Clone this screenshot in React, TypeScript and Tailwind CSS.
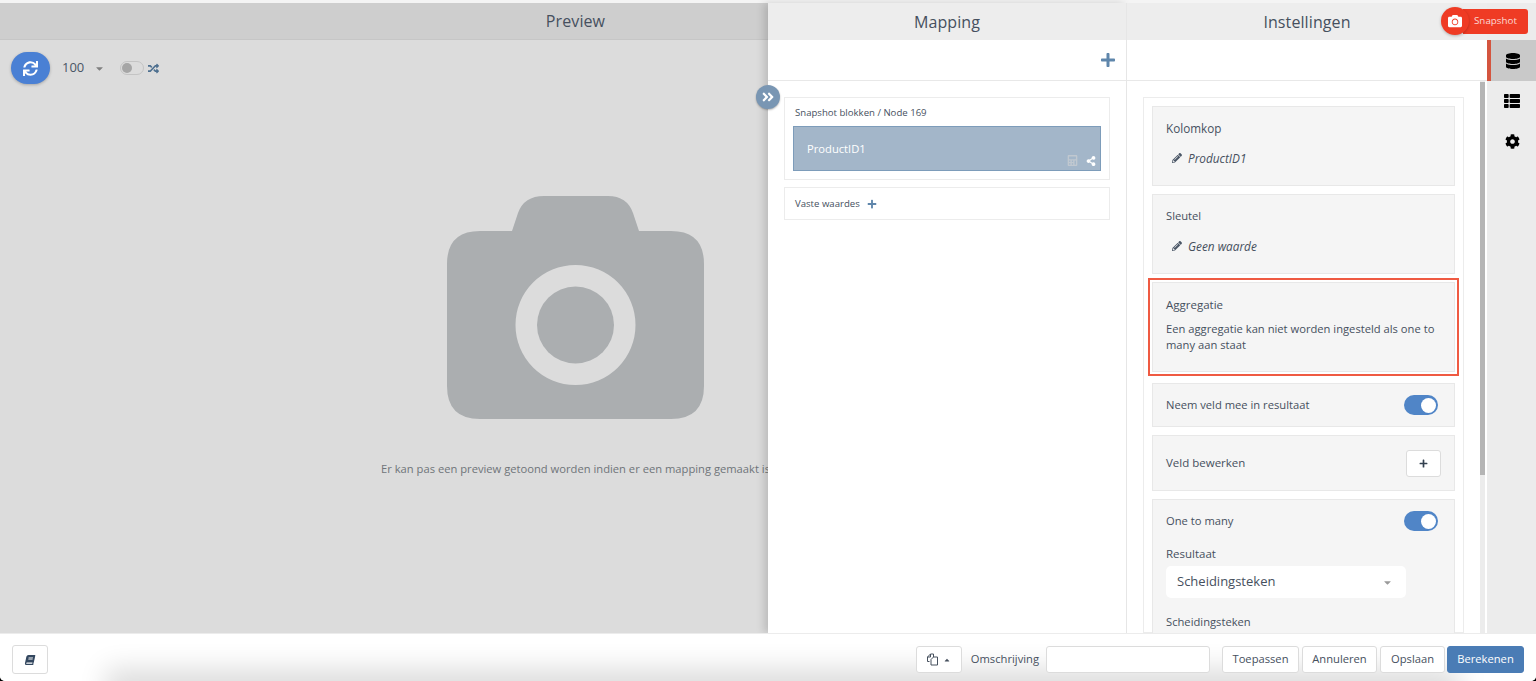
import {
  FaAngleDoubleRight,
  FaBook,
  FaCalculator,
  FaCamera,
  FaCaretDown,
  FaCaretUp,
  FaCog,
  FaDatabase,
  FaPencilAlt,
  FaPlus,
  FaRandom,
  FaShareAlt,
  FaSync,
  FaThList,
} from "react-icons/fa";

function Toggle() {
  return (
    <div className="flex h-[20px] w-[34px] items-center justify-end rounded-full bg-[#5085c7] pr-[2px]">
      <div className="h-[15px] w-[15px] rounded-full bg-white" />
    </div>
  );
}

function FieldPanel({ label, value, labelClass }: { label: string; value: string; labelClass: string }) {
  return (
    <div className="h-[80px] border border-[#e8e8e8] bg-[#f5f5f5] pl-[13px] pt-[13px]">
      <p className={`leading-[16px] ${labelClass}`}>{label}</p>
      <div className="mt-[14px] flex items-center gap-[6px] pl-[6px] text-[11.8px] italic">
        <FaPencilAlt className="text-[10px] text-[#4a5666]" />
        <span className="leading-[16px]">{value}</span>
      </div>
    </div>
  );
}

function FooterButton({ label, className }: { label: string; className: string }) {
  return (
    <button type="button" className={`h-[27px] rounded-[3px] border text-[11.2px] ${className}`}>
      {label}
    </button>
  );
}

export default function App() {
  return (
    <div className="h-screen bg-black">
      <div className="relative flex h-full flex-col overflow-hidden rounded-b-[5px] bg-[#f4f4f4] pt-[3px] font-['Open_Sans',sans-serif] text-[11.2px] text-[#46505e]">
        <div className="flex min-h-0 flex-1">
          {/* Preview, wider than its visible part: Mapping has slid over it */}
          <div className="w-[768px] shrink-0 overflow-hidden bg-[#dcdcdc]">
            <div className="flex w-[1151px] flex-col">
              <div className="flex h-[37px] shrink-0 items-center justify-center border-b border-[#c6c6c6] bg-[#cecece] text-[16px] tracking-[0.1px]">
                Preview
              </div>
              <div className="flex items-center pl-[11px] pt-[12px]">
                <button
                  type="button"
                  className="flex h-[32px] w-[39px] items-center justify-center rounded-[16px] bg-[#4a80d4] text-white shadow-[0_1px_3px_rgba(0,0,0,0.25)]"
                >
                  <FaSync className="text-[15px]" />
                </button>
                <span className="ml-[12px] text-[13px] text-[#4a5666]">100</span>
                <FaCaretDown className="ml-[10px] text-[11px] text-[#808080]" />
                <div className="ml-[15px] flex h-[14px] w-[24px] items-center rounded-full border border-[#c4c4c4] pl-[1px]">
                  <div className="h-[10px] w-[10px] rounded-full bg-[#a6a6a6]" />
                </div>
                <FaRandom className="ml-[4px] text-[11px] text-[#4d6f8f]" />
              </div>
              <div className="flex flex-col items-center whitespace-nowrap pt-[112px]">
                <svg width="257" height="223" viewBox="0 0 257 223" fill="#abaeb0">
                  <path
                    fillRule="evenodd"
                    d="M65 35 L71 17 Q77 0 97 0 H161 Q180 0 186 17 L192 35 H224 Q257 35 257 68 V190 Q257 223 224 223 H33 Q0 223 0 190 V68 Q0 35 33 35 Z M128.500 69 A60 60 0 1 0 128.500 189 A60 60 0 1 0 128.500 69 Z"
                  />
                  <circle cx="128.500" cy="129" r="38.500" />
                </svg>
                <p className="mt-[42px] text-[11.2px] leading-[16px] text-[#6f7479]">
                  Er kan pas een preview getoond worden indien er een mapping gemaakt is
                </p>
              </div>
            </div>
          </div>

          {/* Mapping */}
          <div className="flex w-[359px] shrink-0 flex-col border-r border-[#e6e6e6] bg-white shadow-[-4px_0_8px_rgba(0,0,0,0.15)]">
            <div className="flex h-[37px] shrink-0 items-center justify-center bg-[#ededed] text-[16px] tracking-[0.1px]">
              Mapping
            </div>
            <div className="flex h-[41px] shrink-0 items-center justify-end border-b border-[#e8e8e8] pr-[10px]">
              <FaPlus className="text-[16px] text-[#5f86ab]" />
            </div>
            <div className="flex flex-col gap-[7px] px-[16px] pt-[16px] text-[9.6px]">
              <div className="h-[83px] border border-[#ececec] px-[8px] pt-[8px]">
                <p className="pl-[2px] leading-[14px]">Snapshot blokken / Node 169</p>
                <div className="relative mt-[6px] h-[45px] border border-[#7d9cba] bg-[#a3b6c9] pl-[13px] pt-[14px] text-[11.2px] leading-[16px] text-white">
                  ProductID1
                  <div className="absolute bottom-[4px] right-[4px] flex items-center gap-[8px]">
                    <FaCalculator className="text-[11px] text-[#c0c8d0]" />
                    <FaShareAlt className="text-[10px] text-white" />
                  </div>
                </div>
              </div>
              <div className="flex h-[33px] items-center gap-[7px] border border-[#ececec] px-[10px]">
                <span className="mt-[1px]">Vaste waardes</span>
                <FaPlus className="text-[10px] text-[#5f86ab]" />
              </div>
            </div>
          </div>

          {/* Instellingen */}
          <div className="flex w-[360px] shrink-0 flex-col bg-white">
            <div className="flex h-[37px] shrink-0 items-center justify-center bg-[#ededed] text-[16px] tracking-[0.1px]">
              Instellingen
            </div>
            <div className="h-[41px] shrink-0 border-b border-[#e8e8e8]" />
            <div className="flex min-h-0 flex-1 pl-[16px]">
              <div className="mt-[16px] w-[321px] shrink-0 border border-[#ececec] px-[8px] pt-[8px]">
                <div className="flex flex-col gap-[8px]">
                  <FieldPanel label="Kolomkop" value="ProductID1" labelClass="text-[11.7px]" />
                  <FieldPanel label="Sleutel" value="Geen waarde" labelClass="text-[11.2px]" />
                  <div className="mb-[3px] h-[90px] border border-[#e8e8e8] bg-[#f5f5f5] pl-[13px] pr-[12px] pt-[14px] leading-[16px] outline-2 outline-offset-[2px] outline-[#ef5a42]">
                    <p className="text-[11.5px]">Aggregatie</p>
                    <p className="mt-[8px]">Een aggregatie kan niet worden ingesteld als one to many aan staat</p>
                  </div>
                  <div className="flex h-[44px] items-center justify-between border border-[#e8e8e8] bg-[#f5f5f5] pl-[13px] pr-[16px]">
                    <span className="mt-[1px]">Neem veld mee in resultaat</span>
                    <Toggle />
                  </div>
                  <div className="flex h-[56px] items-center justify-between border border-[#e8e8e8] bg-[#f5f5f5] pl-[13px] pr-[13px]">
                    <span className="text-[11.5px]">Veld bewerken</span>
                    <button
                      type="button"
                      className="flex h-[27px] w-[35px] items-center justify-center rounded-[3px] border border-[#dcdcdc] bg-white"
                    >
                      <FaPlus className="text-[9px] text-[#33404f]" />
                    </button>
                  </div>
                  <div className="h-[200px] border border-[#e8e8e8] bg-[#f5f5f5] pl-[13px] pr-[16px] pt-[11px]">
                    <div className="flex items-center justify-between">
                      <span className="mt-[1px]">One to many</span>
                      <Toggle />
                    </div>
                    <p className="mt-[15px] text-[11.5px] leading-[16px]">Resultaat</p>
                    <div className="mt-[4px] flex h-[32px] w-[240px] items-center justify-between rounded-[5px] bg-white pl-[11px] pr-[13px] text-[13px]">
                      <span>Scheidingsteken</span>
                      <FaCaretDown className="text-[11px] text-[#9a9a9a]" />
                    </div>
                    <p className="mt-[16px] leading-[16px]">Scheidingsteken</p>
                  </div>
                </div>
              </div>
              <div className="ml-[16px] h-full w-[5px] bg-[#ececec]">
                <div className="mt-[1px] h-[393px] bg-[#b5b5b5]" />
              </div>
            </div>
          </div>

          {/* Side tabs */}
          <div className="flex flex-1 flex-col items-stretch bg-[#ececec]">
            <div className="h-[37px] shrink-0" />
            <div className="flex h-[41px] items-center justify-center border-l-[4px] border-[#d4553f] bg-[#c9c9c9] pr-[2px]">
              <FaDatabase className="text-[16px] text-black" />
            </div>
            <div className="flex h-[39px] items-center justify-center pl-[1px]">
              <FaThList className="text-[16px] text-black" />
            </div>
            <div className="flex h-[42px] items-center justify-center pl-[1px]">
              <FaCog className="text-[15px] text-black" />
            </div>
          </div>
        </div>

        {/* Footer */}
        <div className="relative z-10 flex h-[48px] shrink-0 items-start overflow-hidden border-t border-[#ececec] bg-white px-[12px] pt-[11px]">
          <div className="absolute bottom-[-12px] left-[120px] right-[90px] h-[10px] shadow-[0_0_28px_14px_rgba(0,0,0,0.14)]" />
          <button
            type="button"
            className="relative flex h-[29px] w-[36px] items-center justify-center rounded-[3px] border border-[#dcdcdc] bg-white"
          >
            <FaBook className="-skew-x-12 text-[10px] text-[#33475f]" />
          </button>
          <div className="relative ml-auto mt-[1px] flex items-center">
            <button
              type="button"
              className="flex h-[27px] w-[46px] items-center justify-center gap-[4px] rounded-[3px] border border-[#dcdcdc] bg-white text-[#46505e]"
            >
              <svg width="13" height="13" viewBox="0 0 13 13" fill="none" stroke="currentColor" strokeWidth="1" strokeLinejoin="round">
                <path d="M3.500 8.500 H1.500 V4 L4.500 1 H7.500 V4" />
                <path d="M5 6.500 L7.500 4 H11.500 V12 H5 Z" />
                <path d="M4.500 1 V4 H1.500" />
              </svg>
              <FaCaretUp className="text-[8px]" />
            </button>
            <span className="ml-[9px]">Omschrijving</span>
            <div className="ml-[7px] h-[27px] w-[164px] rounded-[3px] border border-[#dcdcdc] bg-white" />
            <div className="ml-[12px] flex items-center gap-[3px]">
              <FooterButton label="Toepassen" className="w-[77px] border-[#dcdcdc] bg-white" />
              <FooterButton label="Annuleren" className="w-[75px] border-[#dcdcdc] bg-white" />
              <FooterButton label="Opslaan" className="w-[65px] border-[#dcdcdc] bg-white" />
              <FooterButton label="Berekenen" className="ml-[-1px] w-[77px] border-[#4a7cb5] bg-[#4a7cb5] text-white" />
            </div>
          </div>
        </div>

        {/* Overlays */}
        <button
          type="button"
          className="absolute left-[756px] top-[85px] z-20 flex h-[24px] w-[24px] items-center justify-center rounded-full bg-[#7996b3] text-white shadow-[0_1px_2px_rgba(0,0,0,0.3)]"
        >
          <FaAngleDoubleRight className="text-[14px]" />
        </button>
        <div className="absolute left-[1441px] top-[7px] z-20 flex h-[28px] items-center">
          <div className="z-10 flex h-[28px] w-[28px] items-center justify-center rounded-full bg-[#ef3b24] text-white shadow-[0_1px_3px_rgba(0,0,0,0.25)]">
            <FaCamera className="text-[14px]" />
          </div>
          <div className="ml-[-6px] flex h-[25px] w-[65px] items-center rounded-r-[3px] bg-[#ef3b24] pl-[11px] text-[9.8px] text-[#fbdad5]">
            Snapshot
          </div>
        </div>
      </div>
    </div>
  );
}
